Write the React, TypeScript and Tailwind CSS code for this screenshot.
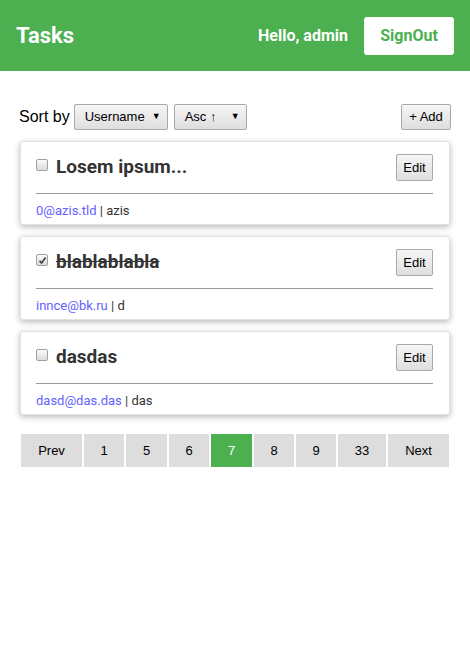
import React from "react";

interface Task {
  title: string;
  done: boolean;
  email: string;
  user: string;
}

const TASKS: Task[] = [
  { title: "Losem ipsum...", done: false, email: "0@azis.tld", user: "azis" },
  { title: "blablablabla", done: true, email: "innce@bk.ru", user: "d" },
  { title: "dasdas", done: false, email: "dasd@das.das", user: "das" },
];

const PAGES = ["Prev", "1", "5", "6", "7", "8", "9", "33", "Next"];
const PAGE_W = ["w-[61px]", "w-[40px]", "w-[41px]", "w-[40px]", "w-[41px]", "w-[40px]", "w-[40px]", "w-[48px]", "w-[61px]"];

const btn =
  "rounded-[2px] border border-[#a9a9a9] bg-gradient-to-b from-[#f6f6f6] to-[#dedede] text-[13px] text-black font-['Liberation_Sans',Arial,sans-serif]";

const Check = ({ on }: { on: boolean }) => (
  <span className="mb-[3px] flex h-[12px] w-[12px] items-center justify-center rounded-[2px] border border-[#a0a0a0] bg-gradient-to-b from-[#fafafa] to-[#dcdcdc]">
    {on && (
      <svg width="9" height="9" viewBox="0 0 9 9">
        <path d="M1.5 4.8 L3.6 7 L7.6 1.6" fill="none" stroke="#444" strokeWidth="1.7" />
      </svg>
    )}
  </span>
);

const Select = ({ label, w }: { label: string; w: string }) => (
  <div className={`${btn} ${w} flex h-[26px] items-center justify-between pl-[10px] pr-[6px]`}>
    <span>{label}</span>
    <span className="text-[9px]">▼</span>
  </div>
);

const TaskCard = ({ title, done, email, user }: Task) => (
  <div className="mx-[20px] rounded-[3px] border border-[#e2e2e2] bg-white pl-[15px] pr-[16px] pt-[12px] pb-[5px] shadow-[0_2px_6px_rgba(0,0,0,0.28)]">
    <div className="flex items-start justify-between">
      <div className="flex items-center gap-[8px] pt-[1px]">
        <Check on={done} />
        <span className={`text-[19px] font-bold leading-[23px] text-[#333] ${done ? "line-through" : ""}`}>{title}</span>
      </div>
      <button className={`${btn} h-[27px] w-[37px]`}>Edit</button>
    </div>
    <div className="mt-[12px] h-px bg-[#999]" />
    <div className="mt-[9px] text-[13px] leading-[16px] text-[#333]">
      <span className="text-[#6262ff]">{email}</span> | {user}
    </div>
  </div>
);

export default function App() {
  return (
    <div className="min-h-[669px] bg-white font-['Roboto',sans-serif]">
      <header className="flex h-[71px] items-center justify-between bg-[#4caf50] pl-[16px] pr-[16px] text-white">
        <h1 className="text-[22px] font-bold">Tasks</h1>
        <div className="flex items-center gap-[16px]">
          <span className="text-[16px] font-bold">Hello, admin</span>
          <button className="h-[38px] w-[90px] rounded-[3px] bg-white text-[16px] font-bold text-[#4caf50]">SignOut</button>
        </div>
      </header>

      <div className="mx-[19px] mt-[33px] mb-[11px] flex items-center justify-between">
        <div className="flex items-center gap-[6px]">
          <span className="mr-[-2px] text-[16px] text-black font-['Liberation_Sans',Arial,sans-serif]">Sort by</span>
          <Select label="Username" w="w-[94px]" />
          <Select label="Asc ↑" w="w-[73px]" />
        </div>
        <button className={`${btn} h-[26px] w-[50px]`}>+ Add</button>
      </div>

      <div className="flex flex-col gap-[11px]">
        {TASKS.map((t) => (
          <TaskCard key={t.title} {...t} />
        ))}
      </div>

      <nav className="mx-[21px] mt-[19px] flex gap-[2px]">
        {PAGES.map((p, i) => (
          <div
            key={p}
            className={`${PAGE_W[i]} flex h-[33px] items-center justify-center text-[13px] font-['Liberation_Sans',Arial,sans-serif] ${
              p === "7" ? "bg-[#4caf50] text-white" : "bg-[#dddddd] text-black"
            }`}
          >
            {p}
          </div>
        ))}
      </nav>
    </div>
  );
}
